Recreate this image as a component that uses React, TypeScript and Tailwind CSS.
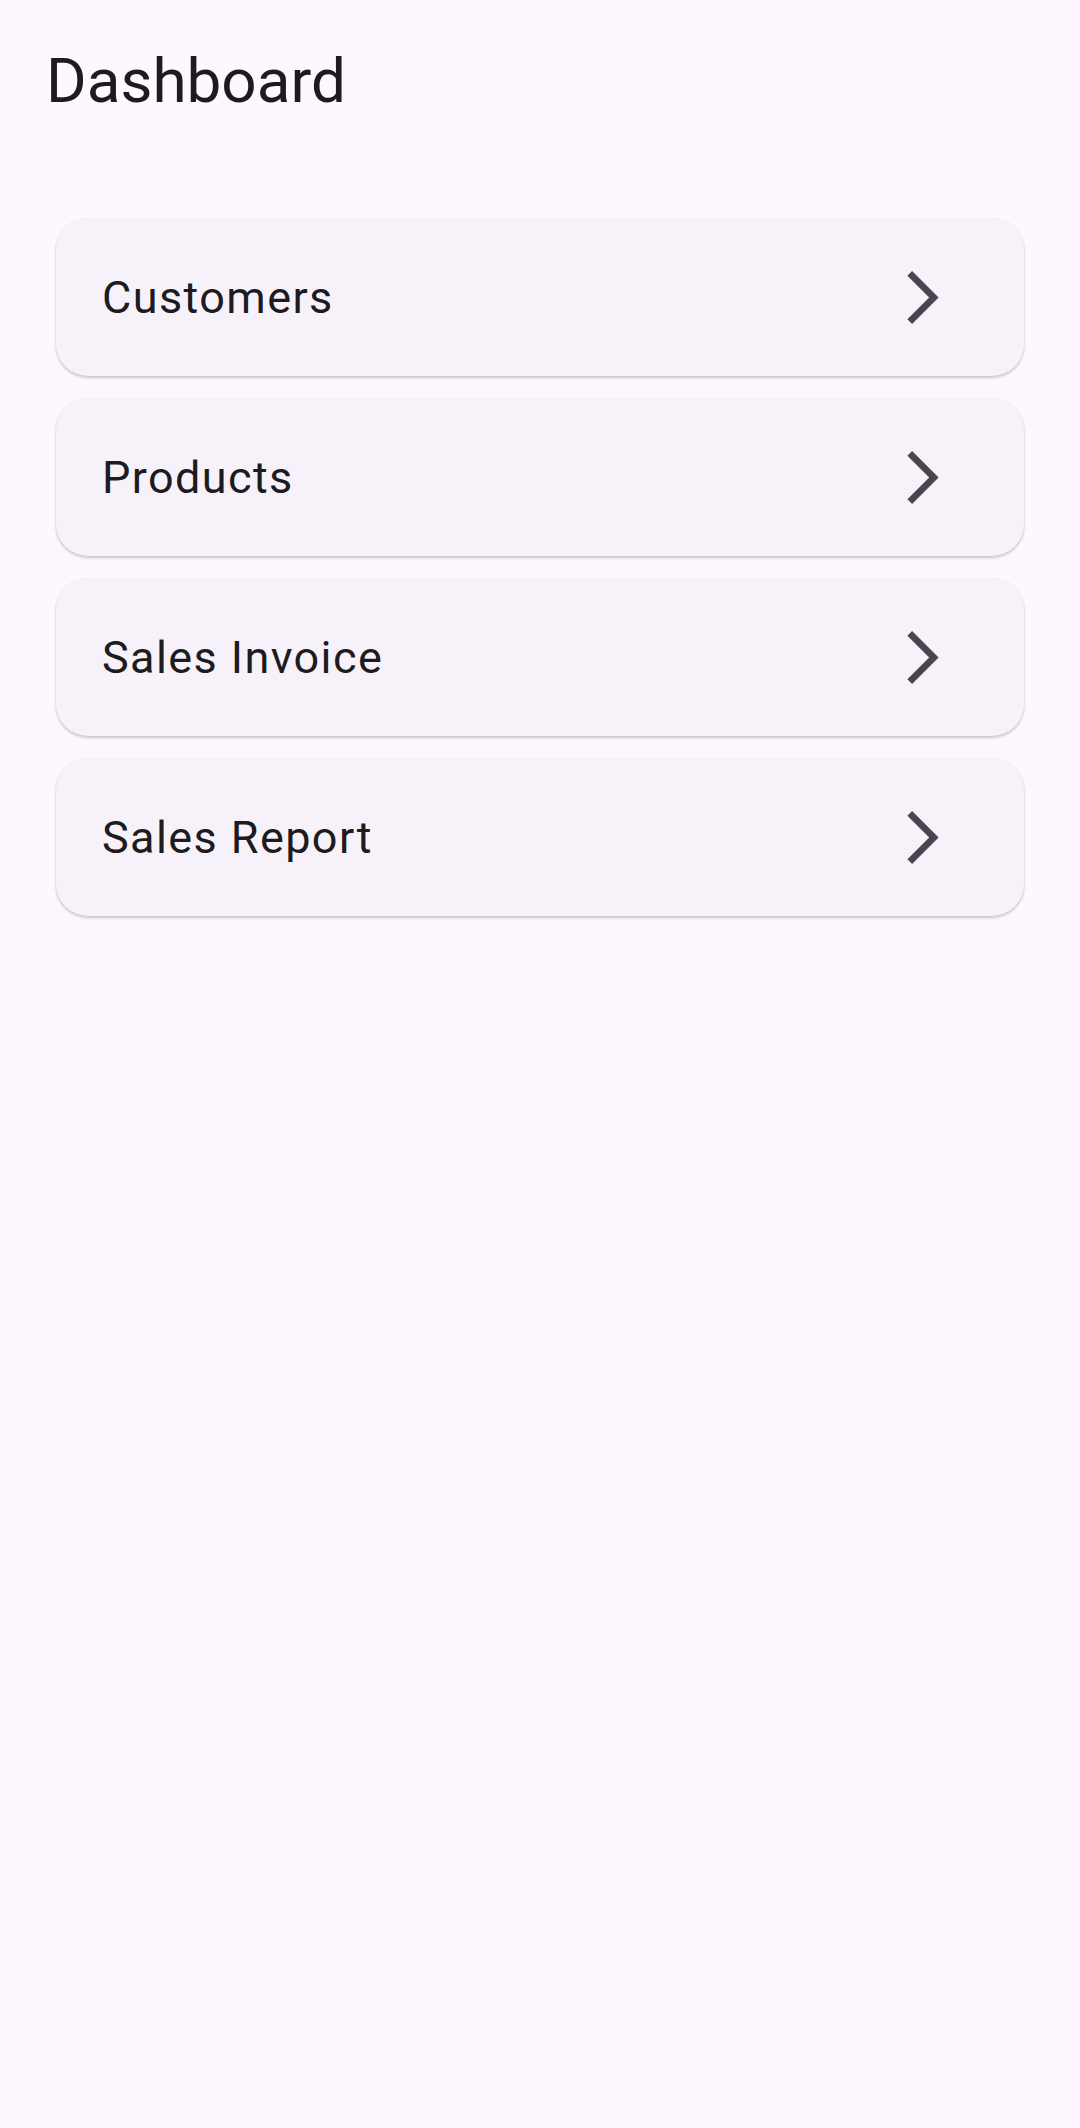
import React from "react";

const items = ["Customers", "Products", "Sales Invoice", "Sales Report"];

function Chevron() {
  return (
    <svg
      viewBox="6.23 2 11.77 20"
      width="32"
      height="53"
      className="shrink-0"
      fill="#49454F"
    >
      <path d="M6.23 20.23L8 22l10-10L8 2 6.23 3.77 14.46 12z" />
    </svg>
  );
}

export default function App() {
  return (
    <div
      className="min-h-[2128px] w-full bg-[#FEF7FF]"
      style={{ fontFamily: "Roboto, 'Noto Sans', sans-serif" }}
    >
      <header className="pl-[46px] pt-[50px]">
        <h1 className="text-[62px] leading-[62px] font-normal text-[#1D1B20]">
          Dashboard
        </h1>
      </header>
      <main className="flex flex-col gap-[22px] px-[56px] pt-[106px]">
        {items.map((label) => (
          <div
            key={label}
            className="flex h-[158px] items-center justify-between rounded-[32px] bg-[#F7F2FA] pl-[46px] pr-[85px] shadow-[0_2px_3px_rgba(0,0,0,0.2),0_0_2px_rgba(0,0,0,0.06)]"
          >
            <span className="text-[45px] leading-none tracking-[1.4px] text-[#1D1B20]">
              {label}
            </span>
            <Chevron />
          </div>
        ))}
      </main>
    </div>
  );
}
